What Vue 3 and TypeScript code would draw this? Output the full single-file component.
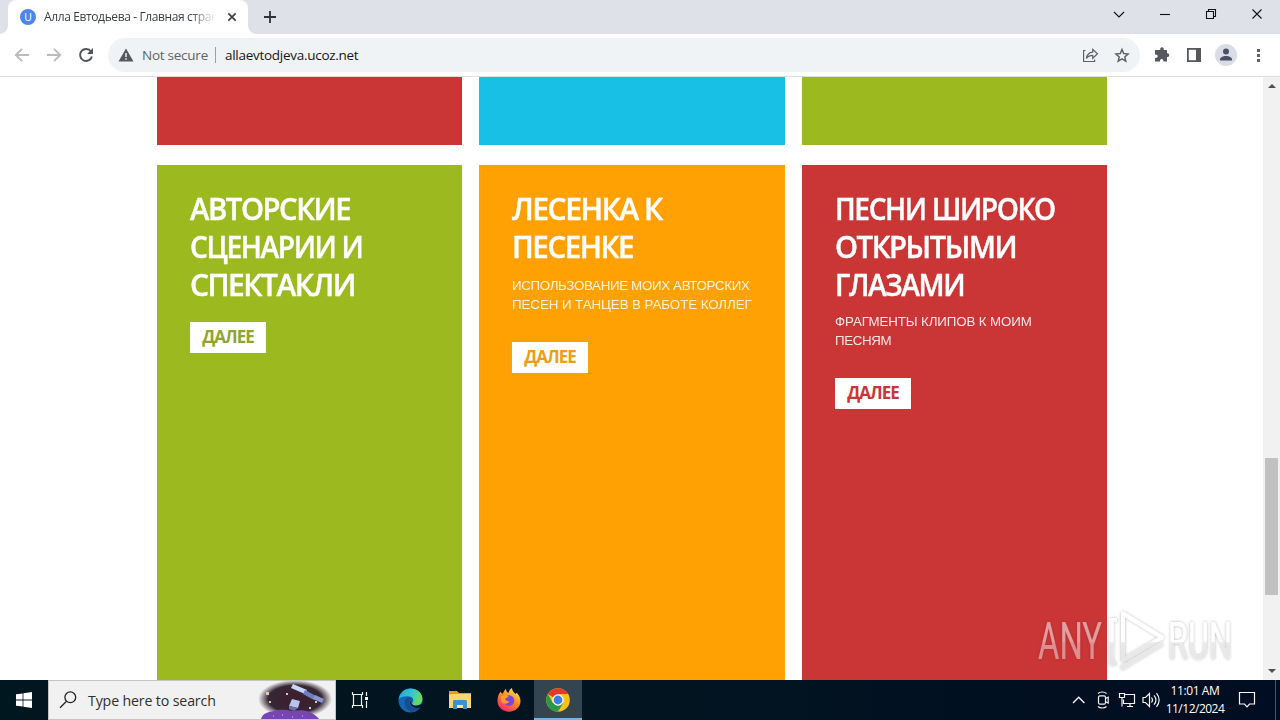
<script setup lang="ts">
interface TitleLine { text: string; stretch: number }
interface DescLine { text: string; spacing: number }
interface Card { tone: string; title: TitleLine[]; desc: DescLine[] }

const cards: Card[] = [
  {
    tone: 'green',
    title: [
      { text: 'АВТОРСКИЕ', stretch: 0.96 },
      { text: 'СЦЕНАРИИ И', stretch: 0.923 },
      { text: 'СПЕКТАКЛИ', stretch: 0.982 },
    ],
    desc: [],
  },
  {
    tone: 'orange',
    title: [
      { text: 'ЛЕСЕНКА К', stretch: 0.985 },
      { text: 'ПЕСЕНКЕ', stretch: 0.97 },
    ],
    desc: [
      { text: 'ИСПОЛЬЗОВАНИЕ МОИХ АВТОРСКИХ', spacing: -0.31 },
      { text: 'ПЕСЕН И ТАНЦЕВ В РАБОТЕ КОЛЛЕГ', spacing: -0.05 },
    ],
  },
  {
    tone: 'red',
    title: [
      { text: 'ПЕСНИ ШИРОКО', stretch: 0.922 },
      { text: 'ОТКРЫТЫМИ', stretch: 0.958 },
      { text: 'ГЛАЗАМИ', stretch: 0.927 },
    ],
    desc: [
      { text: 'ФРАГМЕНТЫ КЛИПОВ К МОИМ', spacing: -0.1 },
      { text: 'ПЕСНЯМ', spacing: -0.35 },
    ],
  },
]
</script>

<template>
  <div class="screen">
    <header class="tabs">
      <div class="tab">
        <span class="favicon">U</span>
        <span class="tab-title">Алла Евтодьева - Главная стран</span>
        <svg class="tab-close" width="10" height="10" viewBox="0 0 10 10"><path d="M1.3 1.3l7.4 7.4M8.7 1.3L1.3 8.7" stroke="#3c4043" stroke-width="1.7" /></svg>
      </div>
      <svg class="plus" width="12" height="12" viewBox="0 0 12 12"><path d="M6 0v12M0 6h12" stroke="#2f3236" stroke-width="1.8" /></svg>
      <svg class="wincontrols" width="160" height="34" viewBox="0 0 160 34" fill="none" stroke="#111" stroke-width="1.1">
        <path d="M4 12l5 5 5-5" />
        <path d="M50 14.5h10" />
        <path d="M96.500 11.500h7v7h-7zM98.500 11.500v-2h7v7h-2" />
        <path d="M142.500 9.500l9 9M151.500 9.500l-9 9" />
      </svg>
    </header>

    <div class="toolbar">
      <svg class="nav" width="108" height="42" viewBox="0 0 108 42" fill="none" stroke-width="1.9">
        <path d="M29 21H16M22 14.800L15.800 21l6.200 6.200" stroke="#b9bbbe" />
        <path d="M47 21h13M54 14.800l6.200 6.200-6.200 6.200" stroke="#b9bbbe" />
        <path d="M91 17.500A6 6 0 1 0 91.900 22.500" stroke="#505458" />
        <path d="M93 14v6h-6z" fill="#505458" stroke="none" />
      </svg>
      <div class="omnibox">
        <svg class="warn" width="16" height="14" viewBox="0 0 16 14"><path d="M8 .5L15.500 13.500H.5z" fill="#55595e" /><path d="M8 5v4M8 10.200v1.600" stroke="#f1f3f4" stroke-width="1.500" /></svg>
        <span class="notsecure">Not secure</span>
        <span class="sep"></span>
        <span class="url">allaevtodjeva.ucoz.net</span>
        <svg class="boxicons" width="60" height="33" viewBox="0 0 60 33" fill="none" stroke="#5f6368" stroke-width="1.200">
          <path d="M5.500 11.500H3.600v11h11V20.500" />
          <path d="M6.500 19.500c.5-4.500 3-6.200 6.200-6.400v-2.800l4.800 4.500-4.800 4.500v-2.900c-2.700 0-4.700.8-6.200 3.100z" />
          <path d="M42 10.500l1.700 4.100 4.400.4-3.300 2.900 1 4.300-3.800-2.300-3.800 2.300 1-4.300-3.300-2.900 4.400-.4z" stroke-width="1.500" />
        </svg>
      </div>
      <svg class="tools" width="140" height="42" viewBox="0 0 140 42">
        <path d="M18 16h3.300c-.4-1.800.4-2.800 1.700-2.800s2.100 1 1.700 2.800H28v3.400c1.300-.2 2.200.6 2.200 1.800S29.300 23.300 28 23v4.500h-3.600c.2-1.700-.5-2.600-1.700-2.600s-1.900.9-1.700 2.600H16V24c1.700.2 2.700-.5 2.700-1.700s-1-2-2.700-1.800V16z" transform="translate(-1 0)" fill="#55595e" />
        <rect x="47.900" y="14.900" width="12.200" height="12.200" fill="#fff" stroke="#55595e" stroke-width="1.800" /><path d="M56 14h5v14h-5z" fill="#55595e" />
        <circle cx="86" cy="21" r="11" fill="#dadde5" />
        <circle cx="86" cy="17.600" r="3" fill="#4b5064" /><path d="M80 26.500v-1c0-2.300 3-3.600 6-3.600s6 1.300 6 3.600v1z" fill="#4b5064" />
        <path d="M117 15h3v3h-3zM117 20h3v3h-3zM117 25h3v3h-3z" fill="#5f6368" />
      </svg>
    </div>

    <main class="page">
      <div class="content">
        <div class="grid top">
          <div class="card red"></div><div class="card blue"></div><div class="card green"></div>
        </div>
        <div class="grid main">
          <section v-for="card in cards" :key="card.tone" class="card" :class="card.tone">
            <h2><span v-for="l in card.title" :key="l.text" :style="{ transform: `scaleX(${l.stretch})` }">{{ l.text }}</span></h2>
            <p v-if="card.desc.length"><span v-for="l in card.desc" :key="l.text" :style="{ letterSpacing: l.spacing + 'px' }">{{ l.text }}</span></p>
            <a class="more">ДАЛЕЕ</a>
          </section>
        </div>
      </div>
      <div class="scroll">
        <i class="up"></i><i class="thumb"></i><i class="down"></i>
      </div>
    </main>

    <svg class="watermark" width="220" height="78" viewBox="0 0 220 78">
      <defs>
        <filter id="glow" x="-20%" y="-20%" width="140%" height="140%"><feDropShadow dx="0" dy="0" stdDeviation="1.500" flood-color="#000" flood-opacity=".3" /></filter>
        <linearGradient id="fade" gradientUnits="userSpaceOnUse" x1="0" y1="8" x2="0" y2="70">
          <stop offset="0" stop-color="#fff" /><stop offset=".51" stop-color="#fff" /><stop offset=".53" stop-color="#e9e9e9" /><stop offset="1" stop-color="#e6e6e6" />
        </linearGradient>
        <linearGradient id="fade-red" gradientUnits="userSpaceOnUse" x1="0" y1="8" x2="0" y2="70">
          <stop offset="0" stop-color="#fff" stop-opacity=".5" /><stop offset=".51" stop-color="#fff" stop-opacity=".5" /><stop offset=".53" stop-color="#fff" stop-opacity=".42" /><stop offset="1" stop-color="#fff" stop-opacity=".42" />
        </linearGradient>
      </defs>
      <text x="8" y="57" class="wm any" textLength="64" lengthAdjust="spacingAndGlyphs" filter="url(#glow)">ANY</text>
      <g filter="url(#glow)" fill="none" stroke="url(#fade)" stroke-width="4" stroke-linejoin="round">
        <path d="M93 11.500L132 35.500 93 58z" />
        <path d="M87 18h-5.500v43.500H86M91 66.500l41-25" />
      </g>
      <text x="138" y="57" class="wm run" textLength="64" lengthAdjust="spacingAndGlyphs" filter="url(#glow)">RUN</text>
    </svg>

    <footer class="taskbar">
      <div class="start"><svg width="16" height="16" viewBox="0 0 16 16"><path d="M0 2.300L6.600 1.400v6.200H0zM7.400 1.300L16 0v7.600H7.400zM0 8.400h6.600v6.200L0 13.700zM7.400 8.400H16V16l-8.600-1.300z" fill="#fff" /></svg></div>
      <div class="search">
        <svg class="lens" width="18" height="18" viewBox="0 0 18 18" fill="none" stroke="#222" stroke-width="1.300"><circle cx="11.300" cy="6.300" r="5.400" /><path d="M7.500 10.200L1 16.700" /></svg>
        <span class="search-text">Type here to search</span>
        <svg class="space" width="76" height="38" viewBox="0 0 76 38">
          <defs>
            <radialGradient id="sky"><stop offset="0" stop-color="#401d2b" /><stop offset=".72" stop-color="#352735" /><stop offset="1" stop-color="#3a2b3a" stop-opacity="0" /></radialGradient>
          </defs>
          <ellipse cx="36" cy="18" rx="37" ry="19" fill="url(#sky)" />
          <path d="M34 3l14 6-2 4-14-6z" fill="#c9d5f4" /><path d="M46 9l11 6-2 4-11-6z" fill="#6d80bf" /><path d="M56 14l9 4-2 4-9-4z" fill="#8798cf" />
          <path d="M33 18l8 2-2 7-9-2z" fill="#b5c5ec" /><path d="M30 25l9 2-4 3-5-2z" fill="#6a72a8" />
          <path d="M7 11h3v3H7zM10 20h2v2h-2zM27 12h2v2h-2zM50 26h2v2h-2zM56 20h2v2h-2z" fill="#e2c6ae" />
          <path d="M2 38c2-6 7-7 13-8 7-2 13-1 18 0 9-2 20-1 27 8z" fill="#7845b5" />
          <path d="M14 34h1v2h-1zM23 33h1v2h-1zM33 35h1v2h-1zM43 34h1v2h-1z" fill="#ae80dd" />
        </svg>
      </div>
      <div class="app"><svg width="20" height="20" viewBox="0 0 20 20" fill="none" stroke="#eee" stroke-width="1.200"><path d="M2.500 2v2.500h10V2M2.500 18v-2.500h10V18M3.500 4.500h8v11h-8zM16.500 2v4M16.500 11v7" /><path d="M15 7h3v3h-3z" fill="#fff" stroke="none" /></svg></div>
      <div class="app edge">
        <svg width="25" height="25" viewBox="0 0 24 24">
          <defs><linearGradient id="e1" x1="0" y1="0" x2="1" y2=".4"><stop offset="0" stop-color="#249de0" /><stop offset=".55" stop-color="#34c5d0" /><stop offset="1" stop-color="#68db5d" /></linearGradient></defs>
          <circle cx="12" cy="12" r="11.500" fill="#1267b4" />
          <path d="M.7 11C1.500 4.800 6 .5 12 .5c6.500 0 11.500 4.500 11.500 10 0 4-3 6.200-6.400 6.200-3 0-4.200-1.200-3.300-2.500 2.500-3.500-.3-6.200-4.300-6.200C5 8 1.800 9.200.7 11z" fill="url(#e1)" />
          <path d="M9.200 9.200c-4.500 2.500-4 10.300 3.300 13.800 3.500.2 7.200-1.600 9.200-4.800-4.500 2.200-10.700.2-10.700-4.200 0-2 1-3.200 2-3.800-1-.9-2.500-1.200-3.800-1z" fill="#174d8b" />
          <path d="M13.500 11.500c-2 1.800-.7 5.500 3.600 5.500 2.700 0 4.600-.6 6.900-2.500v3l-2 1c-5 1.700-9.500-.3-10.300-4 0-1.500.7-2.500 1.800-3z" fill="#03151f" />
        </svg>
      </div>
      <div class="app explorer"><svg width="22" height="20" viewBox="0 0 22 20"><path d="M0 1h8l2 2h12v5H0z" fill="#e89c20" /><path d="M1 4h21v14H0V5z" fill="#ffd66b" /><path d="M4 19v-7.500c0-.8.600-1.500 1.500-1.500h11c.9 0 1.500.7 1.500 1.500V19h-4v-4H8v4z" fill="#3b91d4" /><path d="M8 15h6v3H8z" fill="#ffe79e" /></svg></div>
      <div class="app"><svg width="24" height="24" viewBox="0 0 24 24">
        <defs><linearGradient id="f1" x1=".8" y1="0" x2=".2" y2="1"><stop offset="0" stop-color="#ffe94a" /><stop offset=".45" stop-color="#ff8a22" /><stop offset="1" stop-color="#f3206c" /></linearGradient></defs>
        <path d="M3.500 3.500C4 5 5 5.500 6 5.500 7 3 8 1.500 9 1c0 2 1 3 2.500 4C12 2.500 13.500.8 15 0c0 3 2 4 3.500 6l1.200-1.200C22.300 7.300 23.500 10 23.500 13c0 6-5 10.700-11.500 10.700S.5 19 .5 13c0-4 1-7 3-9.500z" fill="url(#f1)" />
        <circle cx="12" cy="12.500" r="5.300" fill="#7b45db" /><path d="M4 8c3-2 6-1 8 1-2 0-2.500 1-4 2 1 1.800 2.500 2.500 4.500 2-1 2-3 3-5.500 2.500C4.500 15 3.500 11.500 4 8z" fill="#ff9b27" />
      </svg></div>
      <div class="app active"><svg width="24" height="24" viewBox="0 0 24 24">
        <circle cx="12" cy="12" r="11.800" fill="#fbc116" />
        <path d="M12 12L1.800 6.100A11.800 11.800 0 0 1 22.200 6.100L12 6.100z" fill="#e33b2e" />
        <path d="M1.800 6.100A11.800 11.800 0 0 0 12 23.800l5.100-8.850L12 12 6.900 14.950z" fill="#279847" />
        <circle cx="12" cy="12" r="5.700" fill="#fff" /><circle cx="12" cy="12" r="4.400" fill="#3b7de8" />
      </svg></div>
      <svg class="tray" width="100" height="40" viewBox="0 0 100 40" fill="none" stroke="#f3f3f3" stroke-width="1.200">
        <path d="M5 23l5.700-5.700 5.700 5.700" stroke-width="1.400" />
        <rect x="30.500" y="15.800" width="7" height="8.400" rx="1.500" /><path d="M37.500 18.500l2.700-1.300v5.800l-2.700-1.300M30 13.500c2-2 6.500-2 8.500 0M30 26.500c2 2 6.500 2 8.500 0" />
        <path d="M57 14.500h9.500v9H55.500v-4M59 26.500h6M62 23.500v3" /><path d="M51.500 13.500h5v4h-5zM54 17.500v9" />
        <path d="M75 17.500h2.500l4-4v13l-4-4H75zM83.500 17.500c1.200 1.500 1.200 3.500 0 5M86 15.300c2.500 3 2.500 6.400 0 9.400M88.500 13.200c3.500 4.500 3.500 9.100 0 13.600" />
      </svg>
      <div class="clock"><span class="time">11:01 AM</span><span class="date">11/12/2024</span></div>
      <svg class="note" width="18" height="18" viewBox="0 0 18 18" fill="none" stroke="#f5f5f5" stroke-width="1.200"><path d="M1.500 1.500h15v11.500h-5L9 15.800 6.500 13h-5z" /></svg>
      <i class="peek"></i>
    </footer>
  </div>
</template>

<style>
body { margin: 0; overflow: hidden; }
</style>

<style scoped>
.screen { position: relative; width: 1280px; height: 720px; display: flex; flex-direction: column; overflow: hidden; background: #fff; font-family: "Open Sans", "Noto Sans", sans-serif; }
.screen svg { flex: none; display: block; }
.tabs { height: 34px; flex: none; background: #dee1e8; display: flex; align-items: center; box-sizing: border-box; padding-left: 8px; }
.tab { position: relative; width: 240px; height: 34px; background: #fff; border-radius: 8px 8px 0 0; display: flex; align-items: center; box-sizing: border-box; padding-left: 12px; }
.tab::before, .tab::after { content: ""; position: absolute; bottom: 0; width: 8px; height: 8px; }
.tab::before { left: -8px; background: radial-gradient(circle at 0 0, transparent 7.500px, #fff 8px); }
.tab::after { right: -8px; background: radial-gradient(circle at 100% 0, transparent 7.500px, #fff 8px); }
.favicon { width: 16px; height: 16px; border-radius: 50%; background: #4d85ee; color: #fff; font-size: 10.500px; line-height: 16px; text-align: center; }
.tab-title { margin-left: 8px; width: 172px; white-space: nowrap; font-size: 12px; letter-spacing: -.38px; color: #3c4043; line-height: 20px; -webkit-mask-image: linear-gradient(90deg, #000 146px, transparent 172px); mask-image: linear-gradient(90deg, #000 146px, transparent 172px); }
.tab-close { margin-left: 11px; }
.plus { margin-left: 16px; }
.wincontrols { margin-left: auto; margin-right: 10px; }
.toolbar { height: 42px; flex: none; display: flex; align-items: center; border-bottom: 1px solid #dcdee1; }
.omnibox { width: 1032px; height: 34px; border-radius: 17px; background: #f0f3f5; display: flex; align-items: center; box-sizing: border-box; padding-left: 10px; white-space: nowrap; }
.notsecure { width: 66px; margin-left: 8px; color: #5f6368; font-size: 13.500px; letter-spacing: -.25px; }
.sep { width: 1px; height: 16px; margin-left: 7px; background: #9b9fa4; }
.url { margin-left: 9px; color: #16171a; font-size: 13.500px; letter-spacing: -.28px; }
.boxicons { margin-left: auto; }
.page { height: 603px; flex: none; display: flex; justify-content: space-between; }
.content { margin-left: 157px; width: 950px; display: flex; flex-direction: column; gap: 20px; }
.grid { display: grid; grid-template-columns: 305px 306px 305px; column-gap: 17px; }
.top { height: 68px; }
.main { height: 515px; }
.card { color: #fff; }
.main .card { padding: 24px 20px 0 33px; }
.red { background: #ca3536; --tone: #ca3536; }
.blue { background: #18c0e6; }
.green { background: #9cba20; --tone: #8fa52b; }
.orange { background: #ffa102; --tone: #f09d16; }
h2 { margin: 0 0 1px; font-size: 30.500px; font-weight: 600; line-height: 38px; letter-spacing: -1.500px; -webkit-text-stroke: .4px #fff; }
h2 span { display: block; width: max-content; white-space: nowrap; transform-origin: 0 50%; }
p span { display: block; white-space: nowrap; }
p { margin: 9px 0 0; font: 13.300px/19px "Liberation Sans", Arial, sans-serif; opacity: .88; }
.orange p { margin-top: 11px; }
.more { display: block; width: 76px; height: 31px; margin-top: 19px; background: #fff; color: var(--tone); font-size: 17px; font-weight: 700; line-height: 30px; text-align: center; letter-spacing: -1px; }
p + .more { margin-top: 28px; }
.scroll { position: relative; width: 17px; background: #f1f1f1; }
.scroll i { position: absolute; }
.up { left: 5px; top: 7px; border: 4px solid transparent; border-top: 0; border-bottom: 4px solid #505050; }
.down { left: 5px; bottom: 7px; border: 4px solid transparent; border-bottom: 0; border-top: 4px solid #505050; }
.thumb { left: 2px; top: 381px; width: 13px; height: 137px; background: #c1c1c1; }
.watermark { position: absolute; left: 1030px; top: 602px; }
.wm { font-family: Roboto, "Open Sans", sans-serif; font-size: 51px; font-weight: 400; }
.any { fill: url(#fade-red); }
.run { fill: url(#fade); }
.taskbar { height: 40px; flex: none; display: flex; align-items: center; background: linear-gradient(90deg, #01171f, #021420 50%, #010d22); color: #fff; }
.start { width: 48px; display: flex; justify-content: center; }
.search { width: 288px; height: 40px; box-sizing: border-box; background: #f1f1f1; border: 1px solid #c4c4c4; display: flex; align-items: center; padding-left: 10px; color: #303030; }
.search-text { margin-left: 11px; font-size: 14.200px; letter-spacing: -.15px; white-space: nowrap; }
.space { margin-left: auto; }
.app { width: 48px; height: 40px; margin-right: 1.500px; display: flex; align-items: center; justify-content: center; }
.edge, .explorer { box-sizing: border-box; padding-left: 2px; }
.active { background: #35454f; box-shadow: inset 0 -2px #72b6e8; margin-right: 0; }
.tray { margin-left: auto; }
.clock { width: 62px; margin-left: -4px; display: flex; flex-direction: column; align-items: center; font-size: 12px; letter-spacing: -.5px; line-height: 18px; white-space: nowrap; }
.time { letter-spacing: -.4px; }
.note { margin-left: 12px; }
.peek { width: 1px; height: 40px; margin-left: 19px; margin-right: 4px; background: #4b5663; }
</style>
